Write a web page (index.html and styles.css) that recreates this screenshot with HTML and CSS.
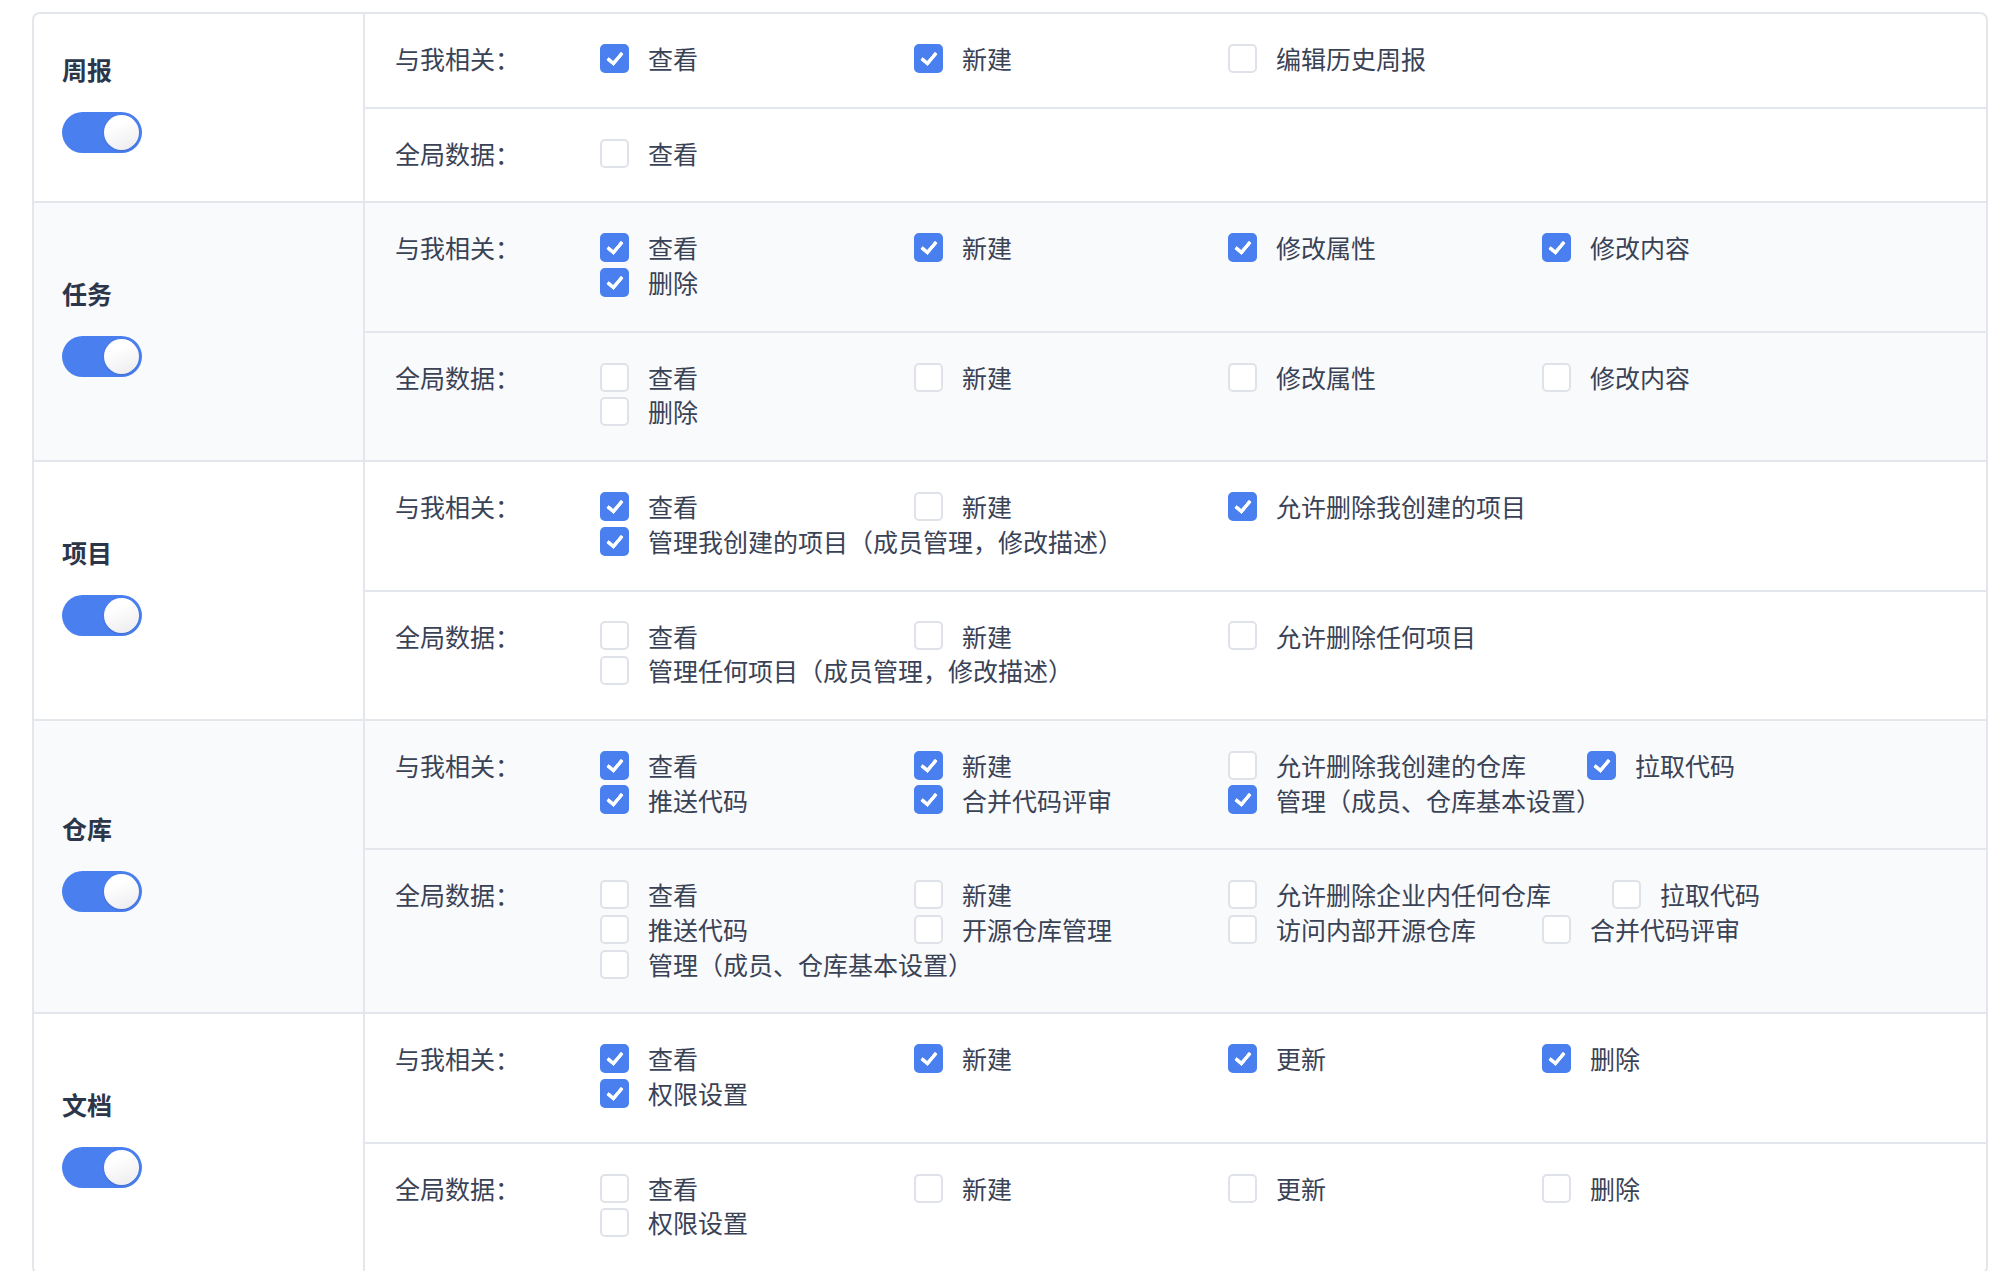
FILE: index.html
```html
<!DOCTYPE html>
<html>
<head>
<meta charset="UTF-8">
<title>权限设置</title>
<link rel="stylesheet" href="styles.css">
</head>
<body>
<div class="card">

	<!-- 周报 -->
	<div class="module">
		<div class="module-head">
			<div class="module-name">周报</div>
			<span class="switch on"><span class="knob"></span></span>
		</div>
		<div class="module-body">
			<div class="perm-row">
				<div class="perm-label">与我相关：</div>
				<div class="perm-list">
					<label class="perm"><span class="box checked"></span><span class="perm-text">查看</span></label>
					<label class="perm"><span class="box checked"></span><span class="perm-text">新建</span></label>
					<label class="perm"><span class="box"></span><span class="perm-text">编辑历史周报</span></label>
				</div>
			</div>
			<div class="perm-row">
				<div class="perm-label">全局数据：</div>
				<div class="perm-list">
					<label class="perm"><span class="box"></span><span class="perm-text">查看</span></label>
				</div>
			</div>
		</div>
	</div>

	<!-- 任务 -->
	<div class="module gray">
		<div class="module-head">
			<div class="module-name">任务</div>
			<span class="switch on"><span class="knob"></span></span>
		</div>
		<div class="module-body">
			<div class="perm-row">
				<div class="perm-label">与我相关：</div>
				<div class="perm-list">
					<label class="perm"><span class="box checked"></span><span class="perm-text">查看</span></label>
					<label class="perm"><span class="box checked"></span><span class="perm-text">新建</span></label>
					<label class="perm"><span class="box checked"></span><span class="perm-text">修改属性</span></label>
					<label class="perm"><span class="box checked"></span><span class="perm-text">修改内容</span></label>
					<label class="perm"><span class="box checked"></span><span class="perm-text">删除</span></label>
				</div>
			</div>
			<div class="perm-row">
				<div class="perm-label">全局数据：</div>
				<div class="perm-list">
					<label class="perm"><span class="box"></span><span class="perm-text">查看</span></label>
					<label class="perm"><span class="box"></span><span class="perm-text">新建</span></label>
					<label class="perm"><span class="box"></span><span class="perm-text">修改属性</span></label>
					<label class="perm"><span class="box"></span><span class="perm-text">修改内容</span></label>
					<label class="perm"><span class="box"></span><span class="perm-text">删除</span></label>
				</div>
			</div>
		</div>
	</div>

	<!-- 项目 -->
	<div class="module">
		<div class="module-head">
			<div class="module-name">项目</div>
			<span class="switch on"><span class="knob"></span></span>
		</div>
		<div class="module-body">
			<div class="perm-row">
				<div class="perm-label">与我相关：</div>
				<div class="perm-list">
					<label class="perm"><span class="box checked"></span><span class="perm-text">查看</span></label>
					<label class="perm"><span class="box"></span><span class="perm-text">新建</span></label>
					<label class="perm"><span class="box checked"></span><span class="perm-text">允许删除我创建的项目</span></label>
					<label class="perm"><span class="box checked"></span><span class="perm-text">管理我创建的项目（成员管理，修改描述）</span></label>
				</div>
			</div>
			<div class="perm-row">
				<div class="perm-label">全局数据：</div>
				<div class="perm-list">
					<label class="perm"><span class="box"></span><span class="perm-text">查看</span></label>
					<label class="perm"><span class="box"></span><span class="perm-text">新建</span></label>
					<label class="perm"><span class="box"></span><span class="perm-text">允许删除任何项目</span></label>
					<label class="perm"><span class="box"></span><span class="perm-text">管理任何项目（成员管理，修改描述）</span></label>
				</div>
			</div>
		</div>
	</div>

	<!-- 仓库 -->
	<div class="module gray">
		<div class="module-head">
			<div class="module-name">仓库</div>
			<span class="switch on"><span class="knob"></span></span>
		</div>
		<div class="module-body">
			<div class="perm-row">
				<div class="perm-label">与我相关：</div>
				<div class="perm-list">
					<label class="perm"><span class="box checked"></span><span class="perm-text">查看</span></label>
					<label class="perm"><span class="box checked"></span><span class="perm-text">新建</span></label>
					<label class="perm"><span class="box"></span><span class="perm-text">允许删除我创建的仓库</span></label>
					<label class="perm"><span class="box checked"></span><span class="perm-text">拉取代码</span></label>
					<label class="perm"><span class="box checked"></span><span class="perm-text">推送代码</span></label>
					<label class="perm"><span class="box checked"></span><span class="perm-text">合并代码评审</span></label>
					<label class="perm"><span class="box checked"></span><span class="perm-text">管理（成员、仓库基本设置）</span></label>
				</div>
			</div>
			<div class="perm-row">
				<div class="perm-label">全局数据：</div>
				<div class="perm-list">
					<label class="perm"><span class="box"></span><span class="perm-text">查看</span></label>
					<label class="perm"><span class="box"></span><span class="perm-text">新建</span></label>
					<label class="perm"><span class="box"></span><span class="perm-text">允许删除企业内任何仓库</span></label>
					<label class="perm"><span class="box"></span><span class="perm-text">拉取代码</span></label>
					<label class="perm"><span class="box"></span><span class="perm-text">推送代码</span></label>
					<label class="perm"><span class="box"></span><span class="perm-text">开源仓库管理</span></label>
					<label class="perm"><span class="box"></span><span class="perm-text">访问内部开源仓库</span></label>
					<label class="perm"><span class="box"></span><span class="perm-text">合并代码评审</span></label>
					<label class="perm"><span class="box"></span><span class="perm-text">管理（成员、仓库基本设置）</span></label>
				</div>
			</div>
		</div>
	</div>

	<!-- 文档 -->
	<div class="module">
		<div class="module-head">
			<div class="module-name">文档</div>
			<span class="switch on"><span class="knob"></span></span>
		</div>
		<div class="module-body">
			<div class="perm-row">
				<div class="perm-label">与我相关：</div>
				<div class="perm-list">
					<label class="perm"><span class="box checked"></span><span class="perm-text">查看</span></label>
					<label class="perm"><span class="box checked"></span><span class="perm-text">新建</span></label>
					<label class="perm"><span class="box checked"></span><span class="perm-text">更新</span></label>
					<label class="perm"><span class="box checked"></span><span class="perm-text">删除</span></label>
					<label class="perm"><span class="box checked"></span><span class="perm-text">权限设置</span></label>
				</div>
			</div>
			<div class="perm-row">
				<div class="perm-label">全局数据：</div>
				<div class="perm-list">
					<label class="perm"><span class="box"></span><span class="perm-text">查看</span></label>
					<label class="perm"><span class="box"></span><span class="perm-text">新建</span></label>
					<label class="perm"><span class="box"></span><span class="perm-text">更新</span></label>
					<label class="perm"><span class="box"></span><span class="perm-text">删除</span></label>
					<label class="perm"><span class="box"></span><span class="perm-text">权限设置</span></label>
				</div>
			</div>
		</div>
	</div>

</div>
</body>
</html>
```

FILE: styles.css
```css
body{
	margin:0;
	background-color:#ffffff;
	font-family:"Noto Sans CJK SC", "Noto Sans", sans-serif;
	color:#3a4256;
}
.card{
	margin:12px 12px 0 32px;
	border:2px solid #e3e6eb;
	border-radius:8px;
	overflow:hidden;
	background-color:#ffffff;
}
.module{
	display:flex;
	border-bottom:2px solid #e3e6eb;
}
.module.gray{
	background-color:#f9fafb;
}
.module-head{
	width:301px;
	flex:none;
	display:flex;
	flex-direction:column;
	justify-content:center;
	align-items:flex-start;
	padding:0 0 10px 28px;
	border-right:2px solid #e3e6eb;
}
.module-name{
	font-size:25px;
	line-height:34px;
	font-weight:700;
	color:#2c364a;
	margin-bottom:26px;
}
.switch{
	position:relative;
	display:block;
	width:80px;
	height:41px;
	border-radius:21px;
	background-color:#4a7ff0;
}
.knob{
	position:absolute;
	top:3px;
	right:3px;
	width:35px;
	height:35px;
	border-radius:50%;
	background:linear-gradient(160deg, #ffffff 30%, #ebebee 100%);
	box-shadow:0 1px 2px rgba(30, 50, 100, 0.25);
}
.module-body{
	flex:1;
	min-width:0;
}
.perm-row{
	display:flex;
	padding:27px 30px 31px 30px;
	border-bottom:2px solid #e3e6eb;
}
.perm-row:last-child{
	border-bottom:none;
}
.perm-label{
	width:205px;
	flex:none;
	font-size:25px;
	line-height:34.7px;
	color:#3a4256;
}
.perm-list{
	flex:1;
	display:flex;
	flex-wrap:wrap;
}
.perm{
	display:flex;
	align-items:center;
	min-width:253px;
	height:34.7px;
	margin-right:61px;
}
.box{
	position:relative;
	display:block;
	flex:none;
	width:29px;
	height:29px;
	box-sizing:border-box;
	border:2px solid #dfe2e8;
	border-radius:5px;
	background-color:#ffffff;
}
.box.checked{
	border-color:#4a7ff0;
	background-color:#4a7ff0;
}
.box.checked:after{
	content:"";
	position:absolute;
	left:8px;
	top:3px;
	width:6px;
	height:12px;
	border-right:4px solid #ffffff;
	border-bottom:4px solid #ffffff;
	border-radius:1px;
	transform:rotate(40deg);
}
.perm-text{
	margin-left:19px;
	font-size:25px;
	line-height:34.7px;
	white-space:nowrap;
	color:#3a4256;
}
```
